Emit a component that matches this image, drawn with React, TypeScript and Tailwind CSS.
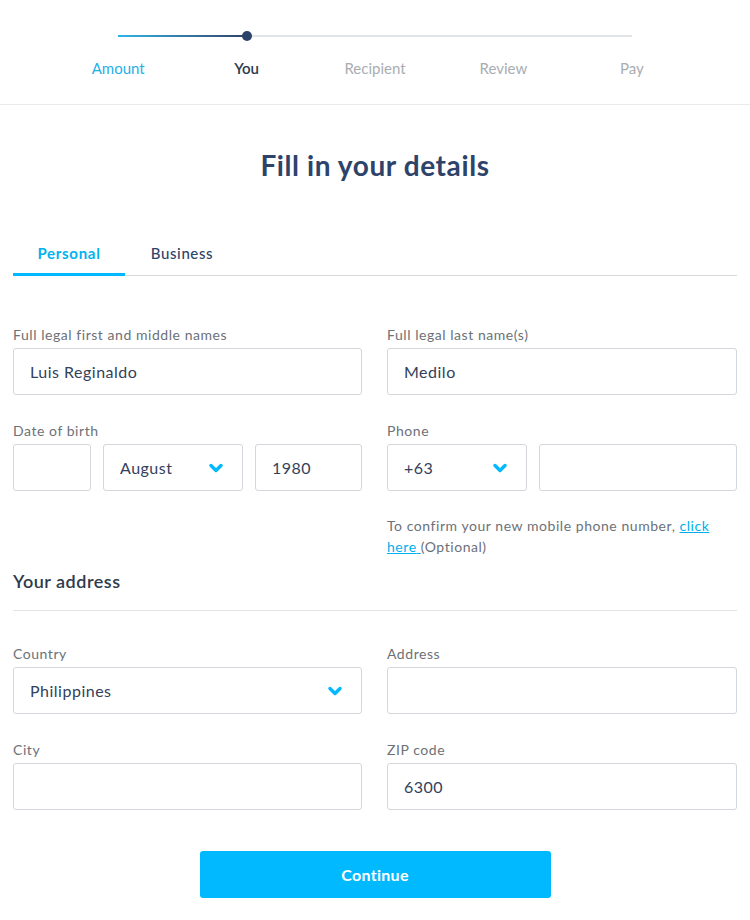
const steps = ["Amount", "You", "Recipient", "Review", "Pay"];

const Label = ({ children }: { children: React.ReactNode }) => (
  <label className="block text-[14px] leading-[20px] tracking-[0.55px] text-[#6c7178] mb-[3px]">{children}</label>
);

const TextBox = ({ value = "", className = "" }: { value?: string; className?: string }) => (
  <div
    className={`h-[47px] border border-[#d3d7db] rounded-[3px] bg-white flex items-center px-[16px] text-[16px] tracking-[0.5px] text-[#33415a] ${className}`}
  >
    {value}
  </div>
);

const Chevron = () => (
  <svg width="14" height="10" viewBox="0 0 14 10" className="text-[#00b9ff]">
    <polyline points="2,2.5 7,7.5 12,2.5" fill="none" stroke="currentColor" strokeWidth="3.4" strokeLinecap="round" strokeLinejoin="round" />
  </svg>
);

const SelectBox = ({ value, className = "" }: { value: string; className?: string }) => (
  <div
    className={`h-[47px] border border-[#d3d7db] rounded-[3px] bg-white flex items-center justify-between pl-[16px] pr-[19px] text-[16px] tracking-[0.5px] text-[#33415a] ${className}`}
  >
    <span>{value}</span>
    <Chevron />
  </div>
);

export default function App() {
  return (
    <div className="min-h-screen bg-white font-['Lato','Liberation_Sans',sans-serif]">
      {/* Stepper */}
      <header className="border-b border-[#e8eaec] pt-[35px] pb-[26px]">
        <div className="w-[642px] mx-auto">
          <div className="relative mx-[64px] h-[2px] bg-[#e2e5e8]">
            <div className="absolute left-0 top-0 h-[2px] w-[129px] bg-gradient-to-r from-[#2ab6e8] to-[#2e4369]" />
            <div className="absolute left-[124px] top-[-4px] h-[10px] w-[10px] rounded-full bg-[#2e4369]" />
          </div>
          <div className="grid grid-cols-5 mt-[21px]">
            {steps.map((s, i) => (
              <div
                key={s}
                className={`text-center text-[15px] leading-[20px] ${
                  i === 0 ? "text-[#1fb0e6]" : i === 1 ? "text-[#2e3a4d] font-semibold" : "text-[#a9adb2]"
                }`}
              >
                {s}
              </div>
            ))}
          </div>
        </div>
      </header>

      <main className="px-[13px]">
        <h1 className="mt-[42px] text-center text-[28px] leading-[36px] font-bold tracking-[0.6px] text-[#2e4369]">
          Fill in your details
        </h1>

        {/* Tabs */}
        <div className="mt-[60px] flex border-b border-[#d8dbde]">
          <div className="w-[112px] text-center text-[15px] leading-[20px] tracking-[0.7px] pb-[10px] font-bold text-[#00b2f0] border-b-[3px] border-[#00b9ff] -mb-px">
            Personal
          </div>
          <div className="w-[114px] text-center text-[15px] leading-[20px] tracking-[0.6px] pb-[10px] text-[#2e4369] font-medium">
            Business
          </div>
        </div>

        <div className="grid grid-cols-[349px_1fr] gap-x-[25px] mt-[49px]">
          <div>
            <Label>Full legal first and middle names</Label>
            <TextBox value="Luis Reginaldo" />
          </div>
          <div>
            <Label>Full legal last name(s)</Label>
            <TextBox value="Medilo" />
          </div>

          <div className="mt-[26px]">
            <Label>Date of birth</Label>
            <div className="flex gap-[12px]">
              <TextBox className="w-[78px]" />
              <SelectBox value="August" className="w-[140px]" />
              <TextBox value="1980" className="flex-1" />
            </div>
          </div>
          <div className="mt-[26px]">
            <Label>Phone</Label>
            <div className="flex gap-[12px]">
              <SelectBox value="+63" className="w-[140px]" />
              <TextBox className="flex-1" />
            </div>
            <p className="mt-[24px] text-[14px] leading-[21px] tracking-[0.55px] text-[#6c7178]">
              To confirm your new mobile phone number,{" "}
              <a href="#" className="text-[#00b0ec] underline">
                click here{" "}
              </a>
              (Optional)
            </p>
          </div>
        </div>

        <h2 className="mt-[12px] pb-[17px] border-b border-[#e2e5e8] text-[18px] leading-[24px] font-semibold tracking-[0.5px] text-[#2e3a4d]">
          Your address
        </h2>

        <div className="grid grid-cols-[349px_1fr] gap-x-[25px] gap-y-[26px] mt-[33px]">
          <div>
            <Label>Country</Label>
            <SelectBox value="Philippines" className="pr-[17px]" />
          </div>
          <div>
            <Label>Address</Label>
            <TextBox />
          </div>
          <div>
            <Label>City</Label>
            <TextBox />
          </div>
          <div>
            <Label>ZIP code</Label>
            <TextBox value="6300" />
          </div>
        </div>

        <div className="flex justify-center mt-[41px] pb-[22px]">
          <button className="w-[351px] h-[47px] rounded-[3px] bg-[#00b9ff] text-white text-[16px] font-bold tracking-[0.3px]">
            Continue
          </button>
        </div>
      </main>
    </div>
  );
}
